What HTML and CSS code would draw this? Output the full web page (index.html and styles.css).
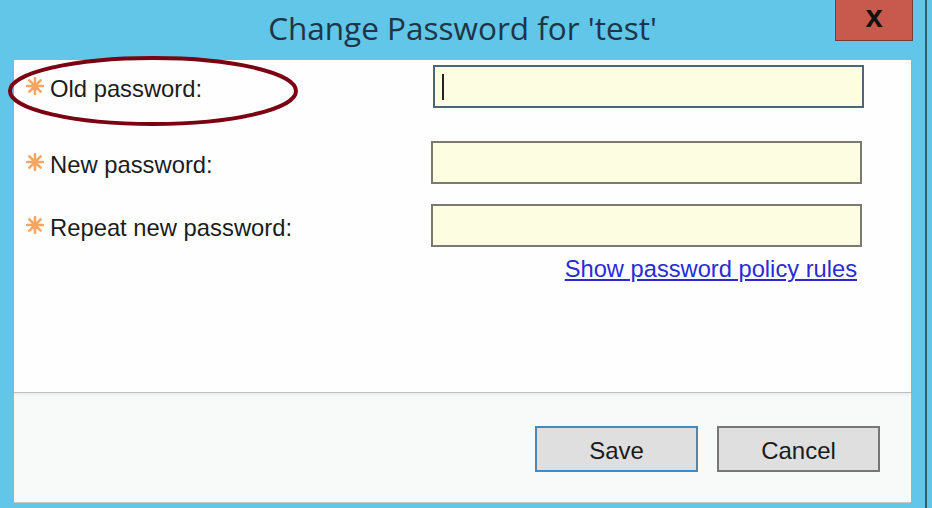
FILE: index.html
```html
<!DOCTYPE html>
<html lang="en">
<head>
  <meta charset="UTF-8">
  <title>Change Password</title>
  <link rel="stylesheet" href="styles.css">
</head>
<body>
  <div class="window">
    <div class="titlebar">
      <span></span>
      <h1 class="title">Change Password for 'test'</h1>
      <button class="close" type="button">x</button>
    </div>

    <form class="panel" id="form-password">
      <div class="row row-old">
        <label class="label">
          <svg class="req" viewBox="0 0 16 16"><path d="M8 1v14M1 8h14M3 3l10 10M13 3L3 13"/></svg>
          Old password:
        </label>
        <div class="field focused"><span class="caret"></span></div>
      </div>
      <div class="row row-new">
        <label class="label">
          <svg class="req" viewBox="0 0 16 16"><path d="M8 1v14M1 8h14M3 3l10 10M13 3L3 13"/></svg>
          New password:
        </label>
        <div class="field"></div>
      </div>
      <div class="row row-repeat">
        <label class="label">
          <svg class="req" viewBox="0 0 16 16"><path d="M8 1v14M1 8h14M3 3l10 10M13 3L3 13"/></svg>
          Repeat new password:
        </label>
        <div class="field"></div>
      </div>
      <div class="links">
        <a href="#">Show password policy rules</a>
      </div>
      <svg class="mark" viewBox="0 0 292 70"><ellipse cx="146" cy="35" rx="143" ry="33"/></svg>
    </form>

    <div class="footer">
      <button class="btn btn-default" type="submit">Save</button>
      <button class="btn" type="button">Cancel</button>
    </div>
  </div>
</body>
</html>
```

FILE: styles.css
```css
body {
  margin: 0;
  background-color: #62c6e8;
  font-family: "Liberation Sans", Arial, sans-serif;
  overflow: hidden;
}
.window {
  width: 927px;
  height: 508px;
  box-sizing: border-box;
  padding: 0 14px 5px 14px;
  border-right: 2px solid #2f5f72;
  display: flex;
  flex-direction: column;
}
.titlebar {
  height: 60px;
  display: grid;
  grid-template-columns: 1fr auto 1fr;
}
.title {
  margin: 8px 0 0 0;
  font-family: "Open Sans", "Noto Sans", sans-serif;
  font-weight: normal;
  font-size: 31.5px;
  line-height: 40px;
  color: #1d3547;
  white-space: nowrap;
}
.close {
  justify-self: end;
  align-self: start;
  margin-right: -2px;
  width: 78px;
  height: 41px;
  padding: 0 0 6px 0;
  border: 1px solid #7d3a33;
  border-top: none;
  background: #c75a4c;
  color: #111;
  font-family: "Liberation Sans", Arial, sans-serif;
  font-weight: bold;
  font-size: 31px;
  line-height: 28px;
}
.panel {
  position: relative;
  height: 333px;
  box-sizing: border-box;
  background: #fefefe;
  padding: 5px 0 0 12px;
  margin: 0;
  border-bottom: 1px solid #bdbdbd;
  box-shadow: 0 2px 3px rgba(0,0,0,0.06);
}
.row {
  display: flex;
  align-items: center;
}
.row-new {
  margin-top: 33px;
}
.row-repeat {
  margin-top: 20px;
}
.label {
  width: 405px;
  display: flex;
  align-items: center;
  gap: 6px;
  font-size: 23.8px;
  color: #1c1c1c;
  padding-top: 5px;
}
.req {
  width: 18px;
  height: 18px;
  margin-top: -7px;
  stroke: #f5a662;
  stroke-width: 2.3;
  stroke-linecap: round;
  fill: none;
}
.field {
  width: 431px;
  height: 43px;
  box-sizing: border-box;
  border: 2px solid #7a7a70;
  background: #fdfde2;
  display: flex;
  align-items: center;
  padding-left: 7px;
}
.field.focused {
  margin-left: 2px;
  border-color: #4f6676;
}
.caret {
  width: 2px;
  height: 26px;
  background: #222;
}
.links {
  width: 831px;
  text-align: right;
  margin-top: 9px;
}
.links a {
  font-size: 23.7px;
  color: #2b2bd4;
  text-decoration: underline;
}
.mark {
  position: absolute;
  left: -7px;
  top: -4px;
  width: 292px;
  height: 70px;
  fill: none;
  stroke: #7b0012;
  stroke-width: 4;
  overflow: visible;
}
.footer {
  flex: 1;
  background: #f8f9f9;
  display: flex;
  justify-content: flex-end;
  align-items: flex-start;
  gap: 19px;
  padding: 33px 31px 0 0;
  border-bottom: 1px solid #c8c8c8;
}
.btn {
  width: 163px;
  height: 46px;
  background: #dfdfdf;
  border: 2px solid #767676;
  font-family: "Liberation Sans", Arial, sans-serif;
  font-size: 24px;
  color: #1a1a1a;
  padding: 4px 0 0 0;
}
.btn-default {
  border-color: #4a88b8;
}
```
